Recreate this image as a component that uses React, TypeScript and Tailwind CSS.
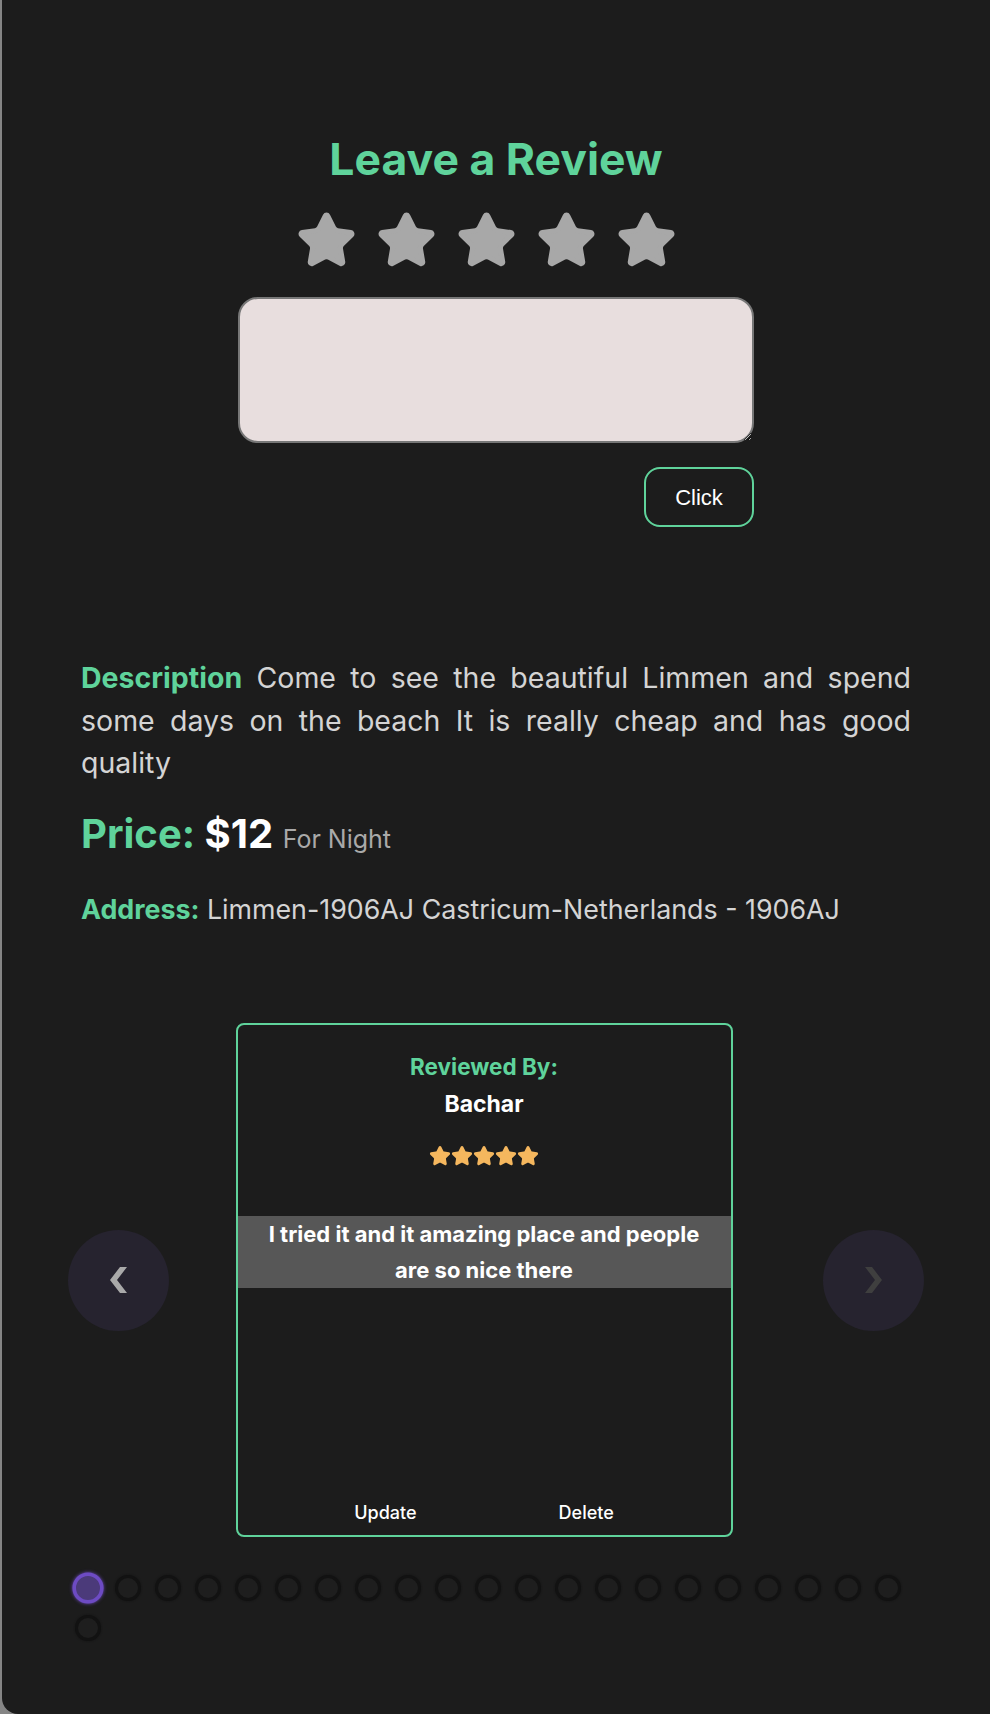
import { Star } from "lucide-react";

const Chevron = ({ dir, color }: { dir: "left" | "right"; color: string }) => (
  <svg width="17" height="26" viewBox="0 0 17 26">
    <polygon
      points={dir === "left" ? "10,0 17,0 7,13 17,26 10,26 0,13" : "7,0 0,0 10,13 0,26 7,26 17,13"}
      fill={color}
    />
  </svg>
);

const App = () => {
  const dots = Array.from({ length: 22 });

  return (
    <div className="min-h-screen bg-[#858585] pl-[2px]">
      <div className="h-[1714px] bg-[#1c1c1c] rounded-bl-[16px] flex flex-col items-center font-['Inter','Noto_Sans',sans-serif]">
        {/* Leave a review form */}
        <h2 className="mt-[133px] text-[44.5px] leading-[53px] font-bold text-[#5fd39b]">
          Leave a Review
        </h2>
        <div className="mt-[24px] flex leading-none">
          {[1, 2, 3, 4, 5].map((n) => (
            <Star key={n} size={61} strokeWidth={2} color="#a8a8a8" fill="#a8a8a8" className="mr-[19px]" />
          ))}
        </div>
        <div className="mt-[26px] w-[516px] flex flex-col">
          <textarea className="w-full h-[146px] rounded-[20px] border-2 border-[#777777] bg-[#e8dede] outline-none" />
          <button className="mt-[24px] self-end w-[110px] h-[60px] rounded-[16px] border-2 border-[#5fd39b] text-white text-[22px] font-['Liberation_Sans',sans-serif]">
            Click
          </button>
        </div>

        {/* Details */}
        <div className="mt-[130.4px] w-full px-[79px]">
          <p className="text-justify text-[28.5px] leading-[42.5px] text-[#d4d4d4]">
            <span className="font-bold text-[#5fd39b]">Description</span> Come to see the beautiful Limmen and spend
            some days on the beach It is really cheap and has good quality
          </p>
          <p className="mt-[25px] text-[40px] leading-[48px] font-bold text-white">
            <span className="text-[#5fd39b]">Price:</span> $12{" "}
            <span className="text-[25px] font-normal text-[#a9a9a9]">For Night</span>
          </p>
          <p className="mt-[30px] text-[26.8px] leading-[32px] text-[#d4d4d4]">
            <span className="font-bold text-[#5fd39b]">Address:</span> Limmen-1906AJ Castricum-Netherlands - 1906AJ
          </p>
        </div>

        {/* Reviews carousel */}
        <div className="mt-[98.5px] w-full px-[66px] flex justify-between items-center">
          <button className="w-[101px] h-[101px] rounded-full bg-[#26232f] flex items-center justify-center">
            <Chevron dir="left" color="#a9a9a9" />
          </button>
          <div className="mr-[24px] w-[497px] h-[514px] rounded-[8px] border-2 border-[#5fd39b] flex flex-col items-center">
            <h4 className="mt-[27.3px] text-[22.5px] leading-[27px] font-bold text-[#5fd39b]">Reviewed By:</h4>
            <h3 className="mt-[10.3px] text-[23px] leading-[28px] font-bold text-white">Bachar</h3>
            <div className="mt-[27.4px] flex leading-none">
              {[1, 2, 3, 4, 5].map((n) => (
                <Star key={n} size={22} strokeWidth={2} color="#f5b75e" fill="#f5b75e" />
              ))}
            </div>
            <p className="mt-[49px] w-full bg-[#575757] px-[20px] text-center text-[22px] leading-[36px] font-bold text-white">
              I tried it and it amazing place and people are so nice there
            </p>
            <div className="mt-auto mb-[12.5px] flex gap-[142px] text-[18px] leading-[20px] font-medium text-white">
              <button>Update</button>
              <button>Delete</button>
            </div>
          </div>
          <button className="w-[101px] h-[101px] rounded-full bg-[#26232f] flex items-center justify-center">
            <Chevron dir="right" color="#3f3f3f" />
          </button>
        </div>

        {/* Dots */}
        <div className="mt-[31px] w-full px-[66px] flex flex-wrap">
          {dots.map((_, i) => (
            <span
              key={i}
              className={
                i === 0
                  ? "w-[26px] h-[26px] m-[7px] rounded-full border-[3px] border-[#6d4bc3] bg-[#4b3a7a] scale-[1.2] shadow-[0_0_3px_#6d4bc3]"
                  : "w-[26px] h-[26px] m-[7px] rounded-full border-[3px] border-[#121212] bg-[#1e1e1e] shadow-[0_0_2px_#111]"
              }
            />
          ))}
        </div>
      </div>
    </div>
  );
};

export default App;
